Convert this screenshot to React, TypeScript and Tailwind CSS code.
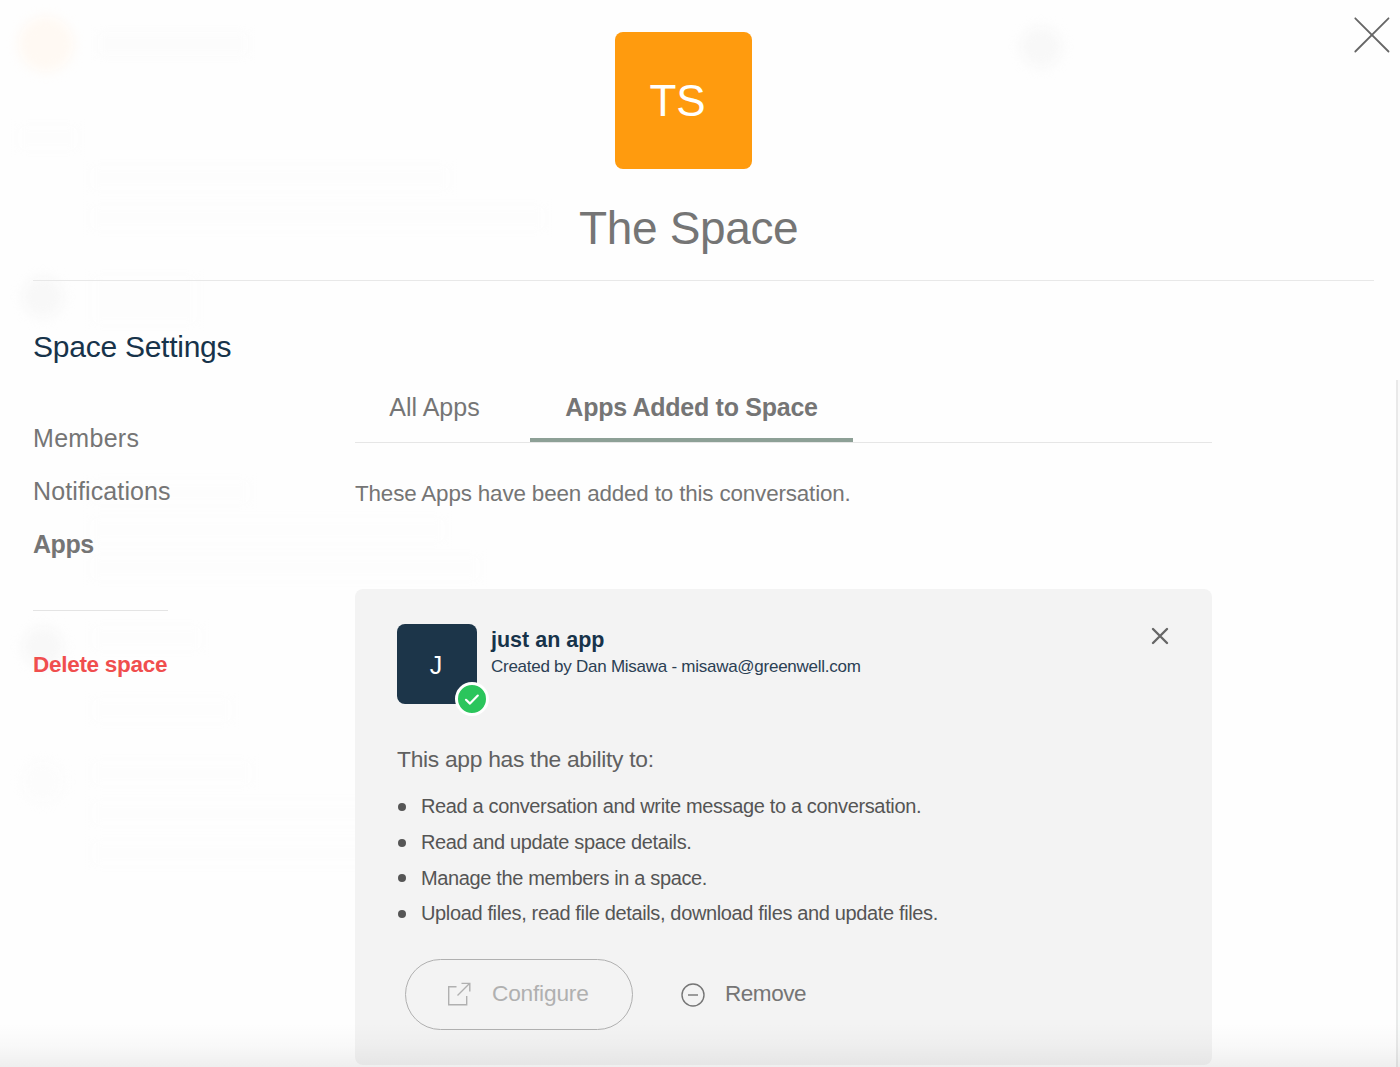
const permissions = [
  "Read a conversation and write message to a conversation.",
  "Read and update space details.",
  "Manage the members in a space.",
  "Upload files, read file details, download files and update files.",
];

function GhostLine({ className }: { className: string }) {
  return <div className={`h-6 bg-[#fdfdfd] blur-[5px] ${className}`} />;
}

/* Faint conversation showing through behind the settings overlay. */
function Backdrop() {
  return (
    <div aria-hidden className="pointer-events-none absolute inset-0 flex flex-col overflow-hidden pt-4 pl-[18px]">
      <div className="flex h-[94px] items-start">
        <div className="size-14 rounded-full bg-[#fff9f3] blur-[6px]" />
        <div className="mt-4 ml-6 h-6 w-[150px] bg-[#fcfcfc] blur-[5px]" />
        <div className="mt-2.5 ml-[772px] size-[42px] rounded-full bg-[#f8f8f8] blur-[6px]" />
      </div>
      <div className="flex h-[150px] gap-3 pt-4">
        <GhostLine className="w-[60px]" />
        <div className="flex flex-col gap-4 pt-10">
          <GhostLine className="w-[360px]" />
          <GhostLine className="w-[455px]" />
        </div>
      </div>
      <div className="flex h-[220px] gap-7 pt-4 pl-1">
        <div className="size-[42px] rounded-full bg-[#f8f8f8] blur-[6px]" />
        <div className="h-12 w-[105px] bg-[#fdfdfd] blur-[5px]" />
      </div>
      <div className="flex h-[140px] flex-col gap-3.5 pl-[72px]">
        <GhostLine className="w-[160px]" />
        <GhostLine className="w-[355px]" />
        <GhostLine className="w-[390px]" />
      </div>
      <div className="flex h-[135px] gap-7 pt-1.5 pl-1">
        <div className="size-[42px] rounded-full bg-[#f8f8f8] blur-[6px]" />
        <div className="flex flex-col gap-12">
          <GhostLine className="w-[110px]" />
          <GhostLine className="w-[140px]" />
        </div>
      </div>
      <div className="flex gap-7 pt-1.5 pl-1">
        <div className="size-[42px] rounded-full bg-[#fcfcfc] blur-[6px]" />
        <div className="flex flex-col gap-4">
          <GhostLine className="w-[160px]" />
          <GhostLine className="w-[290px]" />
          <GhostLine className="w-[290px]" />
        </div>
      </div>
    </div>
  );
}

function Header() {
  return (
    <header className="ml-[33px] flex h-[281px] w-[1341px] flex-col border-b border-[#e8e8e8] pt-8">
      <div className="ml-[582px] flex size-[137px] items-center justify-center rounded-lg bg-[#ff9b0e] pt-[1px] pr-3 text-[44px] text-white">
        TS
      </div>
      <h1 className="mt-[31px] ml-[546px] text-[46px] leading-[56px] tracking-[-0.35px] text-[#757575]">The Space</h1>
    </header>
  );
}

function Sidebar() {
  return (
    <aside className="w-[322px] pt-[46px]">
      <h2 className="text-[30px] leading-[40px] tracking-[-0.25px] text-[#17334a]">Space Settings</h2>
      <nav className="mt-[45px] flex flex-col text-[25px] leading-[53px] text-[#757575]">
        <a className="tracking-[0.3px]">Members</a>
        <a className="tracking-[0.12px]">Notifications</a>
        <a className="font-bold tracking-[-0.45px]">Apps</a>
      </nav>
      <div className="mt-[39px] h-px w-[135px] bg-[#e4e4e4]" />
      <button className="mt-[39px] block text-[22.5px] leading-[30px] font-bold tracking-[-0.28px] text-[#f04e4e]">
        Delete space
      </button>
    </aside>
  );
}

function Tabs() {
  return (
    <div className="flex h-[62px] items-start border-b border-[#e6e6e6] text-[25px] leading-[53px] text-[#757575]">
      <button className="w-[175px] pr-[16px] text-center">All Apps</button>
      <button className="h-[61px] w-[323px] border-b-4 border-[#8da096] pb-1 text-center font-bold tracking-[-0.27px]">
        Apps Added to Space
      </button>
    </div>
  );
}

function AppCard() {
  return (
    <section className="mt-[80px] h-[476px] rounded-lg bg-[#f3f3f3] pt-[35px] pl-[42px]">
      <div className="flex h-[80px]">
        <div className="relative flex size-[80px] items-center justify-center rounded-lg bg-[#1c3549] pr-[2px] text-[25px] text-white">
          <span className="pt-[3px]">J</span>
          <span className="absolute -right-3 -bottom-3 flex size-[34px] items-center justify-center rounded-full border-3 border-white bg-[#2bc55c]">
            <svg viewBox="0 0 28 28" className="size-7" fill="none" stroke="white" strokeWidth="2.2" strokeLinecap="round" strokeLinejoin="round">
              <path d="M8 14.8l4 3.8 7.8-8" />
            </svg>
          </span>
        </div>
        <div className="ml-[14px] flex-1 text-[#17334a]">
          <h3 className="pt-[2px] text-[21.5px] leading-[28px] font-bold">just an app</h3>
          <p className="pt-px text-[17px] leading-[24px] tracking-[-0.26px] text-[#2b4053]">
            Created by Dan Misawa - misawa@greenwell.com
          </p>
        </div>
        <button className="mr-[43px] flex h-6 items-center">
          <svg viewBox="0 0 18 18" className="size-[18px]" fill="none" stroke="#666" strokeWidth="2.4" strokeLinecap="round">
            <path d="M2 2l14 14M16 2L2 16" />
          </svg>
        </button>
      </div>
      <p className="mt-[40px] text-[22.8px] leading-[30px] tracking-[-0.29px] text-[#606060]">This app has the ability to:</p>
      <ul className="mt-[15px] text-[20px] leading-[35.8px] tracking-[-0.36px] text-[#555]">
        {permissions.map((text) => (
          <li key={text} className="flex items-center">
            <span className="mr-[15px] ml-px size-2 rounded-full bg-[#555]" />
            {text}
          </li>
        ))}
      </ul>
      <div className="mt-[27px] ml-[8px] flex h-[71px] items-center">
        <button className="flex h-[71px] w-[228px] items-center rounded-full border border-[#b0b0b0] pb-px pl-[41px] text-[22.7px] tracking-[-0.2px] text-[#b0b0b0]">
          <svg viewBox="0 0 24 24" className="mr-[21px] size-6" fill="none" stroke="currentColor" strokeWidth="1.4">
            <path d="M9.5 4.8H1.7V22.8H19.7V14M14.5 1.4H22.8V9.5M22.5 1.6L10.5 13.6" />
          </svg>
          <span className="-mt-0.5">Configure</span>
        </button>
        <button className="ml-[48px] flex items-center text-[22.5px] tracking-[-0.45px] text-[#757575]">
          <svg viewBox="0 0 24 24" className="mr-[20px] size-6" fill="none" stroke="currentColor" strokeWidth="1.4">
            <circle cx="12" cy="12" r="11" />
            <path d="M7 12h10" />
          </svg>
          <span className="-mt-0.5">Remove</span>
        </button>
      </div>
    </section>
  );
}

export default function App() {
  return (
    <div className="relative h-[1067px] w-[1400px] overflow-hidden bg-[#fefefe] font-['Liberation_Sans',Arial,sans-serif]">
      <Backdrop />
      <div className="relative">
        <Header />
        <div className="flex pl-[33px]">
          <Sidebar />
          <main className="w-[857px] pt-[100px]">
            <Tabs />
            <p className="mt-[36px] text-[22.4px] leading-[30px] tracking-[-0.15px] text-[#757575]">
              These Apps have been added to this conversation.
            </p>
            <AppCard />
          </main>
        </div>
      </div>
      <button className="absolute top-[16px] right-[9px]">
        <svg viewBox="0 0 38 38" className="size-[38px]" fill="none" stroke="#666" strokeWidth="1.8" strokeLinecap="round">
          <path d="M2.3 2.3L35.5 35.5M35.5 2.3L2.3 35.5" />
        </svg>
      </button>
      <div className="absolute top-[380px] right-0 bottom-0 w-1 border-l-2 border-[#e9e9e9] bg-[#fafafa]" />
      <div className="pointer-events-none absolute inset-x-0 bottom-0 h-[44px] bg-linear-to-b from-transparent via-black/2 to-black/6" />
    </div>
  );
}
